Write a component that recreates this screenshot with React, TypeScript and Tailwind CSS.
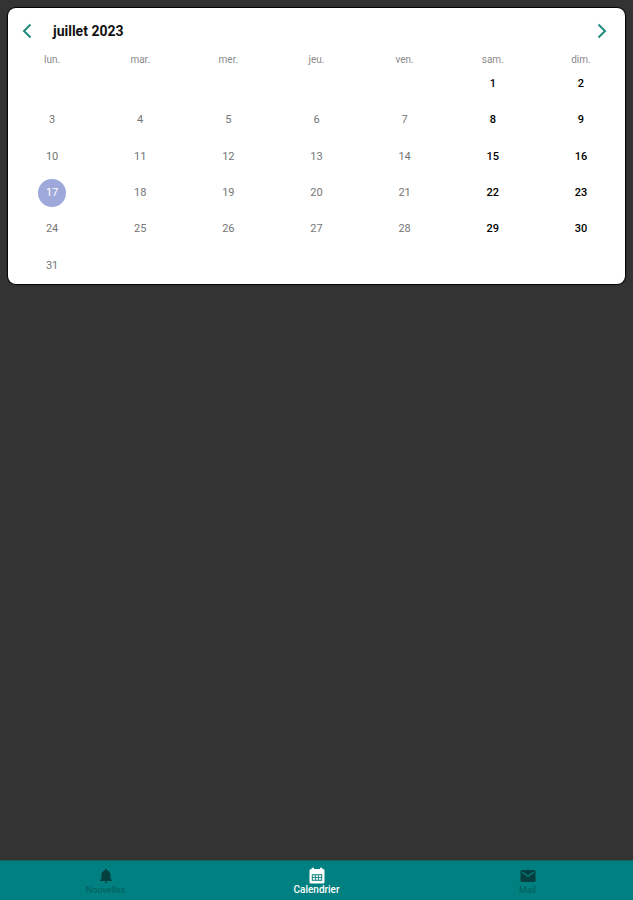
import type { ReactNode } from "react";

interface ItabProps {
  label: string;
  active?: boolean;
  children: ReactNode;
}

const weekDays = ["lun.", "mar.", "mer.", "jeu.", "ven.", "sam.", "dim."];

const weeks: (number | null)[][] = [
  [null, null, null, null, null, 1, 2],
  [3, 4, 5, 6, 7, 8, 9],
  [10, 11, 12, 13, 14, 15, 16],
  [17, 18, 19, 20, 21, 22, 23],
  [24, 25, 26, 27, 28, 29, 30],
  [31, null, null, null, null, null, null],
];

const selectedDay = 17;

const getDayStyle = (day: number, column: number) => {
  if (day === selectedDay) return "bg-[#9fa8da] text-white";
  if (column > 4) return "font-medium text-black";
  return "text-[#757575]";
};

const Chevron = ({ path }: { path: string }) => (
  <svg viewBox="0 0 10 16" className="h-4 w-2.5" fill="none" stroke="#1f8a7d" strokeWidth="2">
    <path d={path} />
  </svg>
);

const Calendar = () => {
  return (
    <section className="mx-2 mt-2 rounded-lg bg-white shadow-[0_0_1px_1px_#000]">
      <header className="flex h-[46px] items-center px-[11px]">
        <button type="button" aria-label="Mois précédent" className="flex w-4 justify-center">
          <Chevron path="M8.500 1.500 2 8l6.500 6.500" />
        </button>
        <h1 className="ml-[18px] flex-1 text-sm font-bold text-[#111111]">juillet 2023</h1>
        <button type="button" aria-label="Mois suivant" className="mr-1 flex w-4 justify-center">
          <Chevron path="M1.500 1.500 8 8l-6.500 6.500" />
        </button>
      </header>

      <table className="h-[230px] w-full table-fixed border-collapse text-center">
        <thead>
          <tr className="h-3">
            {weekDays.map((name) => (
              <th key={name} scope="col" className="p-0 text-[10px] leading-3 font-normal text-[#8a8a8a]">
                {name}
              </th>
            ))}
          </tr>
        </thead>
        <tbody>
          {weeks.map((week, row) => (
            <tr key={row}>
              {week.map((day, column) => (
                <td key={column} className="p-0 align-middle">
                  {day && (
                    <button
                      type="button"
                      className={`mx-auto flex size-7 items-center justify-center rounded-full text-[11px] leading-4 ${getDayStyle(day, column)}`}
                    >
                      {day}
                    </button>
                  )}
                </td>
              ))}
            </tr>
          ))}
        </tbody>
      </table>
    </section>
  );
};

const Tab = ({ label, active, children }: ItabProps) => (
  <a
    href="#"
    aria-current={active ? "page" : undefined}
    className={`flex flex-1 flex-col items-center pt-1.5 ${active ? "font-medium text-white" : "text-[#045c5c]"}`}
  >
    <svg viewBox="0 0 24 24" className="size-[18px]" fill="currentColor">
      {children}
    </svg>
    <span className={`leading-[10px] ${active ? "text-[10px]" : "text-[9px]"}`}>{label}</span>
  </a>
);

const App = () => {
  return (
    <div className="flex min-h-screen flex-col bg-[#333333] font-[Roboto,sans-serif]">
      <main className="flex-1">
        <Calendar />
      </main>

      <nav className="flex h-10 border-t border-[#1b5c5c] bg-[#008080]">
        <Tab label="Nouvelles">
          <path fill="#063f3f" d="M12 21.500c1 0 1.800-.7 1.800-1.700h-3.600c0 1 .8 1.700 1.800 1.700zm6-6v-5c0-3.070-1.630-5.140-4.500-5.820V4a1.500 1.500 0 0 0-3 0v.68C7.640 5.360 6 7.420 6 10.500v5l-2 1.700V18.500h16v-1.300l-2-1.700z" />
        </Tab>
        <Tab label="Calendrier" active>
          <path d="M4 2.500h1V1h3v1.500h8V1h3v1.500h1a2 2 0 0 1 2 2V20a2 2 0 0 1-2 2H4a2 2 0 0 1-2-2V4.500a2 2 0 0 1 2-2z" />
          <path fill="#2a8c8c" d="M5 9.500h14v9H5z" />
          <path fill="#e8f3f3" d="M6.500 11h3v2.200h-3zM10.700 11h2.600v2.200h-2.600zM14.500 11h3v2.200h-3zM6.500 14.700h3V17h-3zM10.700 14.700h2.600V17h-2.600zM14.500 14.700h3V17h-3z" />
        </Tab>
        <Tab label="Mail">
          <path fill="#063f3f" d="M20 4H4a2 2 0 0 0-2 2v12a2 2 0 0 0 2 2h16a2 2 0 0 0 2-2V6a2 2 0 0 0-2-2zm0 4-8 5-8-5V6l8 5 8-5v2z" />
        </Tab>
      </nav>
    </div>
  );
};

export default App;
